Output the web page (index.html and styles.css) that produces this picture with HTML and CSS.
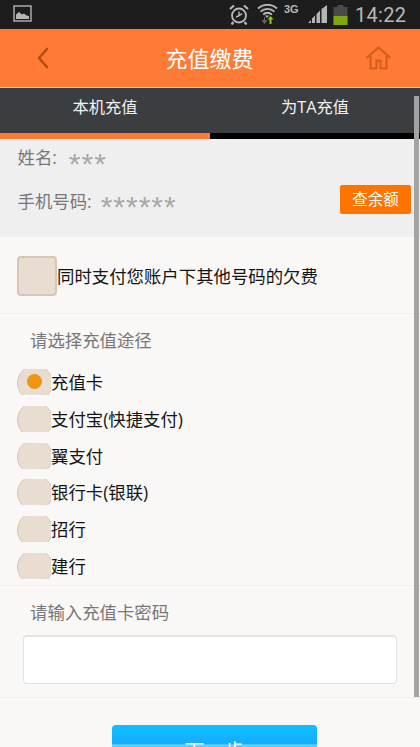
FILE: index.html
```html
<!DOCTYPE html>
<html lang="zh">
<head>
    <meta charset="UTF-8">
    <meta name="viewport" content="width=device-width, initial-scale=1.0">
    <title>充值缴费</title>
    <link rel="stylesheet" href="styles.css">
</head>
<body>
    <div class="statusbar">
        <svg class="st-pic" width="20" height="18" viewBox="0 0 20 18">
            <rect x="1" y="1" width="17" height="15" fill="none" stroke="#b5b5b5" stroke-width="1.4"/>
            <path d="M3 13V9.5L6 7l3 2.5 2-1 2.5 2L16 11v3H3z" fill="#b5b5b5"/>
        </svg>
        <div class="st-right">
            <svg width="20" height="21" viewBox="0 0 20 21">
                <circle cx="10" cy="11.5" r="7" fill="none" stroke="#b8b8b8" stroke-width="1.8"/>
                <path d="M10 7.5v4.200l-3 1.300M10 11.700l3-2" fill="none" stroke="#b8b8b8" stroke-width="1.4"/>
                <path d="M1 5l4-3.500M19 5l-4-3.500M4.500 18l-2 2.500M15.500 18l2 2.500" stroke="#b8b8b8" stroke-width="2.200"/>
            </svg>
            <svg class="st-wifi" width="21" height="21" viewBox="0 0 21 21">
                <path d="M1 4.500a14 14 0 0 1 19 0M3.600 7.600a10 10 0 0 1 13.800 0M6.200 10.600a6 6 0 0 1 8.600 0" fill="none" stroke="#b8b8b8" stroke-width="1.900"/>
                <path d="M8 11.500h4l-1.500 2h-1z" fill="#b8b8b8"/>
                <path d="M7.500 13v5M5.500 16.500l2 3 2-3z" fill="#666" stroke="#666"/>
                <path d="M13.500 20v-5" stroke="#8ecb1f" stroke-width="2"/>
                <path d="M10.500 15.500l3-3.500 3 3.500z" fill="#8ecb1f"/>
            </svg>
            <span class="st-3g">3G</span>
            <svg class="st-signal" width="20" height="19" viewBox="0 0 20 19">
                <path d="M0 18l3-3v3zM4 18v-4.500l3-3V18zM8.500 18V9l3.500-3.500V18zM13.500 18V4L19 0v18z" fill="#b5b5b5"/>
            </svg>
            <svg class="st-batt" width="15" height="20" viewBox="0 0 15 20">
                <path d="M4.500 0h6v2h4v18H.5V2h4z" fill="#4a4a4a"/>
                <rect x=".5" y="11" width="14" height="9" fill="#7fa80e"/>
            </svg>
            <span class="st-time">14:22</span>
        </div>
    </div>

    <div class="header">
        <svg class="back" width="13" height="22" viewBox="0 0 13 22">
            <path d="M11 2L3 11l8 9" fill="none" stroke="#b04e12" stroke-width="2.600" stroke-linecap="round" stroke-linejoin="round"/>
        </svg>
        <h1>充值缴费</h1>
        <svg class="home" width="27" height="24" viewBox="0 0 27 24">
            <path d="M1.500 12L13.500 1.500 25.500 12M5.500 10v12.500h6v-8h4v8h6V10" fill="none" stroke="#d45c1a" stroke-width="2" stroke-linejoin="round"/>
        </svg>
    </div>

    <div class="tabs">
        <div class="tab active">本机充值</div>
        <div class="tab">为TA充值</div>
    </div>

    <div class="info">
        <div class="info-row name-row">
            <span class="lbl">姓名:</span>
            <span class="stars">***</span>
        </div>
        <div class="info-row phone-row">
            <span class="lbl">手机号码:</span>
            <span class="stars">******</span>
            <a class="btn-balance">查余额</a>
        </div>
    </div>

    <div class="section check-section">
        <span class="checkbox"></span>
        <span class="opt-text">同时支付您账户下其他号码的欠费</span>
    </div>

    <div class="section way-section">
        <p class="sec-title">请选择充值途径</p>
        <div class="radio-list">
            <div class="radio-row"><span class="radio on"></span><span class="opt-text">充值卡</span></div>
            <div class="radio-row"><span class="radio"></span><span class="opt-text">支付宝(快捷支付)</span></div>
            <div class="radio-row"><span class="radio"></span><span class="opt-text">翼支付</span></div>
            <div class="radio-row"><span class="radio"></span><span class="opt-text">银行卡(银联)</span></div>
            <div class="radio-row"><span class="radio"></span><span class="opt-text">招行</span></div>
            <div class="radio-row"><span class="radio"></span><span class="opt-text">建行</span></div>
        </div>
    </div>

    <div class="section pwd-section">
        <p class="sec-title">请输入充值卡密码</p>
        <input class="pwd-input" type="text">
    </div>

    <div class="next-wrap">
        <a class="btn-next">下一步</a>
    </div>

    <div class="scrollbar"></div>
</body>
</html>
```

FILE: styles.css
```css
* {
    margin: 0;
    padding: 0;
    box-sizing: border-box;
}

html, body {
    height: 747px;
    overflow: hidden;
}

body {
    position: relative;
    background-color: #f9f8f6;
    font-family: "Open Sans", "Noto Sans CJK SC", sans-serif;
}

.statusbar {
    height: 29px;
    background-color: #1d1d1d;
    display: flex;
    align-items: center;
    justify-content: space-between;
    padding: 0 9px 0 13px;
}

.st-pic {
    margin-top: -1px;
}

.st-right {
    display: flex;
    align-items: center;
    color: #b8b8b8;
}

.st-wifi {
    margin-left: 8px;
}

.st-3g {
    font-family: "Liberation Sans", sans-serif;
    font-size: 11px;
    font-weight: bold;
    width: 19px;
    margin: -11px 0 0 6px;
}

.st-signal {
    margin-left: 5px;
}

.st-batt {
    margin-left: 5px;
}

.st-time {
    font-family: Roboto, sans-serif;
    font-size: 20px;
    width: 56px;
    margin-left: 7px;
    letter-spacing: 0.3px;
}

.header {
    height: 59px;
    background-color: #ff7a35;
    border-bottom: 1px solid #d5d0cc;
    display: flex;
    align-items: center;
    justify-content: space-between;
    padding: 0 28px 0 36px;
}

.header h1 {
    font-size: 22px;
    font-weight: normal;
    color: #fff;
    margin: 0 0 2px 5px;
}

.tabs {
    height: 51px;
    display: flex;
    background-color: #3a3e41;
}

.tab {
    flex: 1;
    color: #f2f2f2;
    font-size: 16.300px;
    text-align: center;
    padding-top: 6px;
    border-bottom: 6px solid #000;
}

.tab.active {
    border-bottom-color: #ff7a35;
}

.info {
    height: 98px;
    background-color: #efeff0;
    padding: 4px 9px 0 17.500px;
    color: #777;
    font-size: 17.400px;
}

.info-row {
    display: flex;
    align-items: center;
}

.name-row {
    height: 27px;
}

.phone-row {
    height: 30px;
    margin-top: 15px;
}

.lbl {
    margin-right: 9px;
}

.name-row .lbl {
    margin-right: 12px;
}

.stars {
    font-family: "Liberation Sans", sans-serif;
    font-size: 30px;
    letter-spacing: 1px;
    color: #a8a8a8;
    line-height: 44px;
    height: 30px;
}

.btn-balance {
    margin-left: auto;
    width: 71px;
    height: 29px;
    align-self: flex-start;
    line-height: 29px;
    text-align: center;
    background-color: #ff7300;
    color: #fff;
    font-size: 15.500px;
    border-radius: 2px;
}

.section {
    border-bottom: 1px solid #efeeec;
}

.check-section {
    height: 77px;
    display: flex;
    align-items: center;
    padding: 1px 0 0 17px;
}

.checkbox {
    width: 40px;
    height: 40px;
    background-color: #e9dcd0;
    border: 2px solid #d8c6b4;
    border-radius: 4px;
}

.opt-text {
    color: #141414;
    font-size: 17.400px;
    line-height: 26px;
}

.way-section {
    height: 272px;
    padding-top: 13px;
}

.sec-title {
    color: #777;
    font-size: 17.400px;
    line-height: 26px;
    padding-left: 30px;
}

.radio-list {
    display: flex;
    flex-direction: column;
    gap: 10.800px;
    margin-top: 16px;
    padding-left: 17px;
}

.radio-row {
    display: flex;
    align-items: center;
    height: 26px;
}

.radio {
    position: relative;
    width: 34px;
    height: 26px;
    overflow: hidden;
}

.radio::before {
    content: "";
    position: absolute;
    left: 0;
    top: -4px;
    width: 34px;
    height: 34px;
    border-radius: 50%;
    background-color: #e9dcd0;
    border: 1px solid #d8c6b4;
}

.radio.on::after {
    content: "";
    position: absolute;
    left: 10px;
    top: 5px;
    width: 15px;
    height: 15px;
    border-radius: 50%;
    background-color: #ec9612;
}

.pwd-section {
    height: 112px;
    padding-top: 13px;
}

.pwd-input {
    display: block;
    width: 374px;
    height: 49px;
    margin: 10px 0 0 23px;
    background-color: #fff;
    border: 1px solid #e2e2e2;
    border-top-width: 2px;
    border-radius: 4px;
}

.next-wrap {
    padding-top: 27px;
    display: flex;
    justify-content: center;
}

.btn-next {
    display: block;
    width: 205px;
    height: 50px;
    margin-left: 9px;
    background: linear-gradient(#0fc0ff, #14acff 19px, #7fd4ff 20px, #4cc2ff 22px);
    border-radius: 4px;
    color: #fff;
    font-size: 20px;
    line-height: 54px;
    text-align: center;
}

.scrollbar {
    position: absolute;
    right: 1px;
    top: 96px;
    width: 5px;
    height: 601px;
    background-color: #a3a3a3;
}
```
